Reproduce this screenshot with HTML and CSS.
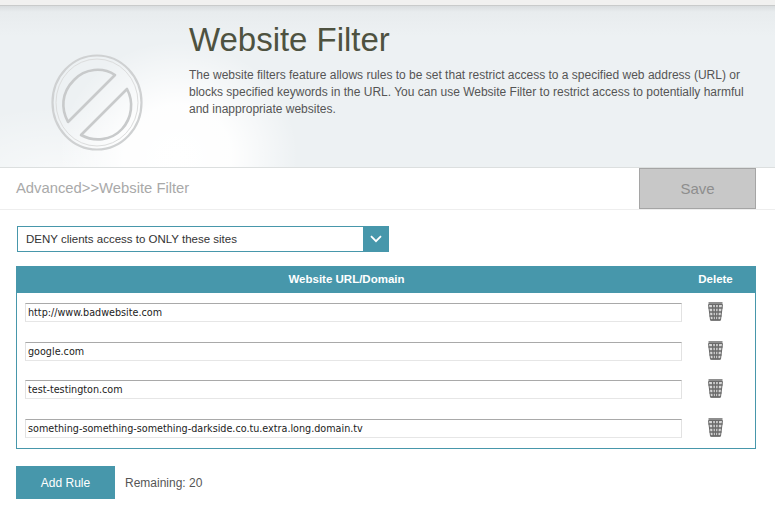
FILE: index.html
```html
<!DOCTYPE html>
<html lang="en">
<head>
<meta charset="utf-8">
<title>Website Filter</title>
<link rel="stylesheet" href="styles.css">
</head>
<body>
<div class="topstrip"></div>
<header class="hero">
  <div class="hero-icon">
    <svg width="92" height="97" viewBox="0 0 92 97" fill="none">
      <ellipse cx="46" cy="48.5" rx="44.5" ry="47" stroke="#cfd1d2" stroke-width="2.2"/>
      <ellipse cx="46" cy="48.5" rx="41" ry="43.5" stroke="#dcdddd" stroke-width="1"/>
      <path d="M64 21 C52 13 34 14 23 26 C10 39 10 55 17 68 Z" stroke="#c8cacb" stroke-width="2.6" stroke-linejoin="round"/>
      <path d="M76 35 C83 48 81 64 71 75 C60 87 43 88 30 81 Z" stroke="#c8cacb" stroke-width="2.6" stroke-linejoin="round"/>
    </svg>
  </div>
  <div class="hero-text">
    <h1>Website Filter</h1>
    <p>The website filters feature allows rules to be set that restrict access to a specified web address (URL) or blocks specified keywords in the URL. You can use Website Filter to restrict access to potentially harmful and inappropriate websites.</p>
  </div>
</header>
<div class="crumbbar">
  <span class="crumb">Advanced&gt;&gt;Website Filter</span>
  <button class="save" type="button">Save</button>
</div>
<main class="content">
  <div class="select">
    <span class="select-label">DENY clients access to ONLY these sites</span>
    <span class="select-arrow">
      <svg width="12" height="8" viewBox="0 0 12 8" fill="none"><path d="M1 1.2 L6 6.2 L11 1.2" stroke="#ffffff" stroke-width="1.8"/></svg>
    </span>
  </div>
  <section class="rules">
    <div class="rules-head">
      <span class="col-url">Website URL/Domain</span>
      <span class="col-del">Delete</span>
    </div>
    <div class="rules-body">
      <div class="rule">
        <input class="url" type="text" value="http://www.badwebsite.com">
        <span class="del"><svg class="bin" width="15" height="19" viewBox="0 0 15 19"><use href="#bin"/></svg></span>
      </div>
      <div class="rule">
        <input class="url" type="text" value="google.com">
        <span class="del"><svg class="bin" width="15" height="19" viewBox="0 0 15 19"><use href="#bin"/></svg></span>
      </div>
      <div class="rule">
        <input class="url" type="text" value="test-testington.com">
        <span class="del"><svg class="bin" width="15" height="19" viewBox="0 0 15 19"><use href="#bin"/></svg></span>
      </div>
      <div class="rule">
        <input class="url" type="text" value="something-something-something-darkside.co.tu.extra.long.domain.tv">
        <span class="del"><svg class="bin" width="15" height="19" viewBox="0 0 15 19"><use href="#bin"/></svg></span>
      </div>
    </div>
  </section>
  <div class="actions">
    <button class="add" type="button">Add Rule</button>
    <span class="remaining">Remaining: 20</span>
  </div>
</main>
<svg class="defs" width="0" height="0">
  <defs>
    <g id="bin" fill="none" stroke="#6a6a6a">
      <path d="M0.5 2.5 H14.5 L12.5 18 H2.5 Z" fill="#d6d6d6" stroke-width="1"/>
      <path d="M0.5 1 H14.5 M0.5 6 H14.5 M1 10 H14 M1.5 14 H13.5 M2.5 18 H12.5" stroke-width="1.3"/>
      <path d="M4.5 2 L5.3 18 M7.5 2 V18 M10.5 2 L9.7 18" stroke-width="1.3"/>
    </g>
  </defs>
</svg>
</body>
</html>
```
FILE: styles.css
```css
* { box-sizing: border-box; }
html, body { margin: 0; padding: 0; }
body {
  width: 775px;
  height: 519px;
  overflow: hidden;
  background: #fff;
  font-family: "Liberation Sans", Arial, sans-serif;
  color: #444;
}
.topstrip {
  height: 6px;
  background: #f1f1f0;
  border-bottom: 1px solid #c9cbcb;
}
.hero {
  height: 162px;
  display: flex;
  overflow: hidden;
  border-bottom: 1px solid #dcdfdf;
  background:
    radial-gradient(ellipse 120px 115px at 178px 150px, #fff 0, rgba(255,255,255,.92) 45%, rgba(255,255,255,0) 100%),
    radial-gradient(ellipse 150px 70px at 60px 170px, rgba(255,255,255,.6) 0, rgba(255,255,255,0) 100%),
    linear-gradient(#d9dddf 0, #e8ecee 6px, #edf1f3 30px, #edf1f3 100%);
}
.hero-icon {
  width: 189px;
  flex: none;
  padding: 48px 0 0 51px;
}
.hero-icon svg { display: block; }
.hero-text { flex: 1; padding: 15px 23px 0 0; }
h1 {
  margin: 0;
  font-size: 33px;
  line-height: 38px;
  font-weight: 400;
  letter-spacing: -0.03px;
  color: #4e5240;
}
p {
  margin: 8px 0 0;
  font-size: 12px;
  line-height: 17px;
  color: #555;
}
.crumbbar {
  height: 42px;
  display: flex;
  align-items: flex-start;
  justify-content: space-between;
  padding: 0 19px 0 16px;
  border-bottom: 1px solid #eee;
}
.crumb {
  margin-top: 12px;
  font-size: 14.8px;
  line-height: 17px;
  color: #a9a9a9;
}
.save {
  width: 117px;
  height: 41px;
  border: 1px solid #a5a5a5;
  background: #c8c8c8;
  color: #8e8e8e;
  font: 15px "Liberation Sans", Arial, sans-serif;
  padding: 0;
}
.content { padding: 16px 19px 0 16px; }
.select {
  width: 372px;
  height: 26px;
  margin-left: 1px;
  display: flex;
  align-items: stretch;
  border: 1px solid #4797ab;
}
.select-label {
  flex: 1;
  padding-left: 8px;
  font-size: 11.5px;
  line-height: 24px;
  color: #333;
}
.select-arrow {
  width: 25px;
  background: #4797ab;
  display: flex;
  align-items: center;
  justify-content: center;
}
.rules {
  margin-top: 14px;
  border: 1px solid #4797ab;
  border-top: 0;
}
.rules-head {
  height: 27px;
  margin: 0 -1px;
  background: #4797ab;
  color: #fff;
  font-size: 11.5px;
  font-weight: 700;
  line-height: 27px;
  display: flex;
}
.col-url { width: 661px; text-align: center; }
.col-del { flex: 1; text-align: center; padding-right: 2px; }
.rules-body { padding: 10px 0 0 8px; height: 155px; }
.rule {
  height: 38.7px;
  display: flex;
  align-items: flex-start;
}
.url {
  width: 657px;
  height: 19px;
  padding: 0 2px;
  border: 1px solid;
  border-color: #a9a9a9 #e2e2e2 #e6e6e6 #e2e2e2;
  background: #fff;
  color: #222;
  font: 10.7px "DejaVu Sans Condensed", "DejaVu Sans", sans-serif;
  outline: none;
}
.del { flex: 1; display: flex; justify-content: center; padding-right: 6px; }
.bin { display: block; margin: -1px 0 0 0; }
.actions {
  margin-top: 17px;
  display: flex;
  align-items: center;
  gap: 10px;
}
.add {
  width: 99px;
  height: 33px;
  border: 0;
  padding: 0;
  background: #4797ab;
  color: #fff;
  font: 12px "Liberation Sans", Arial, sans-serif;
}
.remaining { font-size: 12px; color: #555; }
.defs { position: absolute; }
```
